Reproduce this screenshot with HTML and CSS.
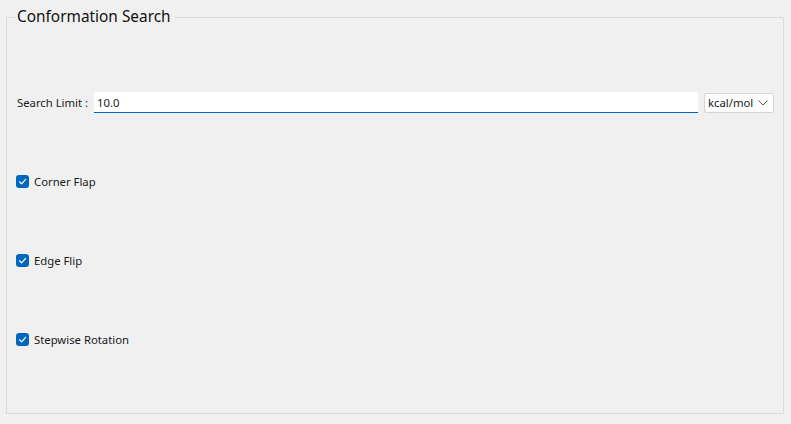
FILE: index.html
```html
<!DOCTYPE html>
<html>
<head>
<meta charset="utf-8">
<link rel="stylesheet" href="styles.css">
</head>
<body>
<fieldset class="group">
  <legend class="group-title">Conformation Search</legend>
  <div class="content">
    <div class="limit-row">
      <label class="limit-label">Search Limit :</label>
      <div class="text-input">10.0</div>
      <div class="combo">
        <span class="combo-text">kcal/mol</span>
        <svg class="chev" width="10" height="6" viewBox="0 0 10 6"><path d="M0.5 0.5 L5 5 L9.5 0.5" fill="none" stroke="#555" stroke-width="1"/></svg>
      </div>
    </div>
    <div class="check-row">
      <span class="checkbox"><svg width="13" height="13" viewBox="0 0 13 13"><path d="M3.5 6.8 L5.6 8.8 L9.6 4.4" fill="none" stroke="#fff" stroke-width="1.2" stroke-linecap="round" stroke-linejoin="round"/></svg></span>
      <span class="check-label">Corner Flap</span>
    </div>
    <div class="check-row">
      <span class="checkbox"><svg width="13" height="13" viewBox="0 0 13 13"><path d="M3.5 6.8 L5.6 8.8 L9.6 4.4" fill="none" stroke="#fff" stroke-width="1.2" stroke-linecap="round" stroke-linejoin="round"/></svg></span>
      <span class="check-label">Edge Flip</span>
    </div>
    <div class="check-row">
      <span class="checkbox"><svg width="13" height="13" viewBox="0 0 13 13"><path d="M3.5 6.8 L5.6 8.8 L9.6 4.4" fill="none" stroke="#fff" stroke-width="1.2" stroke-linecap="round" stroke-linejoin="round"/></svg></span>
      <span class="check-label">Stepwise Rotation</span>
    </div>
  </div>
</fieldset>
</body>
</html>
```
FILE: styles.css
```css
html, body {
  margin: 0;
  padding: 0;
  background: #f0f0f0;
}
body {
  font-family: "Segoe UI", "Noto Sans", "Open Sans", sans-serif;
  font-size: 11.3px;
  color: #1a1a1a;
  padding: 7px 7px 0 6px;
  width: 791px;
  height: 424px;
  box-sizing: border-box;
}
.group {
  margin: 0;
  border: 1px solid #dcdcdc;
  padding: 0 9px 0 9px;
  height: 407px;
  box-sizing: border-box;
  min-width: 0;
}
.group-title {
  font-size: 15.4px;
  line-height: 20px;
  margin-left: -1px;
  padding: 0 4px 0 2px;
  color: #111;
}
.content {
  display: flex;
  flex-direction: column;
  gap: 59px;
  padding-top: 65px;
}
.limit-row {
  display: flex;
  align-items: center;
  height: 21px;
}
.limit-label {
  margin-left: 1px;
  margin-right: 6px;
  white-space: nowrap;
}
.text-input {
  flex: 1;
  height: 21px;
  box-sizing: border-box;
  background: #fff;
  border-bottom: 1px solid #0067c0;
  padding: 2px 4px 0 3px;
  line-height: 17px;
}
.combo {
  margin-left: 6px;
  width: 70px;
  height: 20px;
  box-sizing: border-box;
  background: #fdfdfd;
  border: 1px solid #d6d6d6;
  border-radius: 2px;
  display: flex;
  align-items: center;
  justify-content: space-between;
  padding: 0 5px 0 3px;
}
.chev { display: block; }
.check-row {
  display: flex;
  align-items: center;
  height: 20px;
  margin-top: -1px;
  margin-bottom: 1px;
}
.checkbox {
  width: 13px;
  height: 13px;
  border-radius: 3px;
  background: #0067c0;
  display: block;
  margin-right: 5px;
}
.checkbox svg { display: block; }
```
